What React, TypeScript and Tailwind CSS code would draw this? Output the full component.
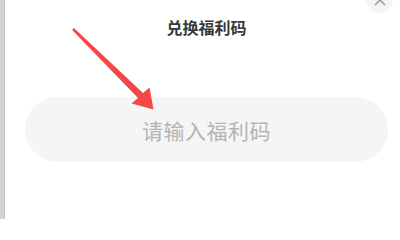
import React from "react";

export default function App() {
  return (
    <div
      className="relative flex w-[400px] h-[219px] overflow-hidden bg-white"
      style={{ fontFamily: '"Noto Sans CJK SC", "Noto Sans", sans-serif' }}
    >
      <div className="w-[5px] h-full bg-[#d2d2d2] border-r border-[#c4c4c4]" />
      <div className="relative flex-1 flex flex-col pl-[20px] pr-[12px]">
        <div className="pt-[15px] h-[39px] text-center text-[16px] leading-[24px] font-bold text-[#383838]">
          兑换福利码
        </div>
        <div className="mt-[58px] h-[65px] rounded-full bg-[#f5f5f5] flex items-center justify-center">
          <span className="text-[21px] leading-[28px] text-[#b4b4b4] tracking-[0.5px]">
            请输入福利码
          </span>
        </div>
        <div className="absolute top-[-14px] right-[7px] w-[27px] h-[27px] rounded-full bg-[#f4f4f4] flex items-center justify-center">
          <svg width="12" height="12" viewBox="0 0 12 12">
            <path d="M1 1 L11 11 M11 1 L1 11" stroke="#9a9a9a" strokeWidth="1.5" fill="none" />
          </svg>
        </div>
      </div>
      <svg
        className="absolute inset-0 pointer-events-none"
        width="400"
        height="219"
        viewBox="0 0 400 219"
      >
        <polygon
          points="73.9,28.1 143,93 149.5,87.5 153.5,109.5 131.5,103.5 138,98 72.1,29.9"
          fill="#f24848"
        />
      </svg>
    </div>
  );
}
